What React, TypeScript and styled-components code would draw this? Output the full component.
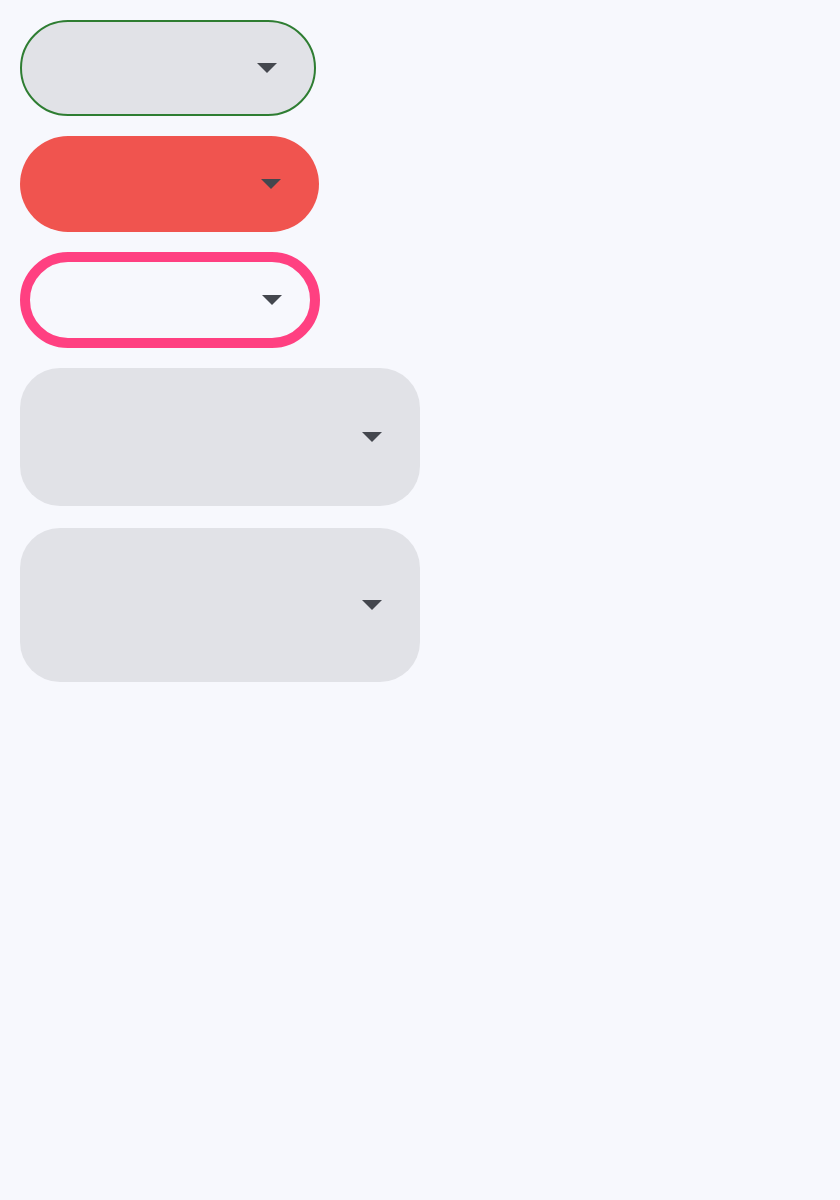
import React from "react";
import styled, { createGlobalStyle } from "styled-components";

const GlobalStyle = createGlobalStyle`
  html, body {
    margin: 0;
    padding: 0;
    background: #f7f8fd;
    font-family: "Roboto", "Liberation Sans", sans-serif;
  }
`;

type Variant = "outlined" | "filled" | "ring" | "tall" | "taller";

const Page = styled.div`
  display: flex;
  flex-direction: column;
  align-items: flex-start;
  gap: 20px;
  padding: 20px;
`;

const Field = styled.div<{ $variant: Variant }>`
  box-sizing: border-box;
  display: flex;
  align-items: center;
  justify-content: flex-end;
  padding-right: 38px;
  width: ${(p) =>
    p.$variant === "outlined"
      ? "296px"
      : p.$variant === "filled"
      ? "299px"
      : p.$variant === "tall" || p.$variant === "taller"
      ? "400px"
      : "300px"};
  height: ${(p) => (p.$variant === "tall" ? "138px" : p.$variant === "taller" ? "154px" : "96px")};
  border-radius: ${(p) => (p.$variant === "tall" || p.$variant === "taller" ? "40px" : "48px")};
  background: ${(p) =>
    p.$variant === "filled" ? "#f0544f" : p.$variant === "ring" ? "#f7f8fd" : "#e1e2e7"};
  border: ${(p) =>
    p.$variant === "outlined"
      ? "2px solid #2e7d32"
      : p.$variant === "ring"
      ? "10px solid #ff4081"
      : "none"};
  ${(p) => p.$variant === "outlined" && "padding-right: 37px;"}
  ${(p) => p.$variant === "ring" && "padding-right: 28px;"}
  ${(p) => p.$variant === "taller" && "margin-top: 2px;"}
`;

const Arrow = styled.svg`
  width: 20px;
  height: 10px;
  fill: #44474e;
  flex-shrink: 0;
`;

const Caret = () => (
  <Arrow viewBox="0 0 20 10">
    <polygon points="0,0 20,0 10,10" />
  </Arrow>
);

const variants: Variant[] = ["outlined", "filled", "ring", "tall", "taller"];

export default function App() {
  return (
    <>
      <GlobalStyle />
      <Page>
        {variants.map((v) => (
          <Field key={v} $variant={v}>
            <Caret />
          </Field>
        ))}
      </Page>
    </>
  );
}
